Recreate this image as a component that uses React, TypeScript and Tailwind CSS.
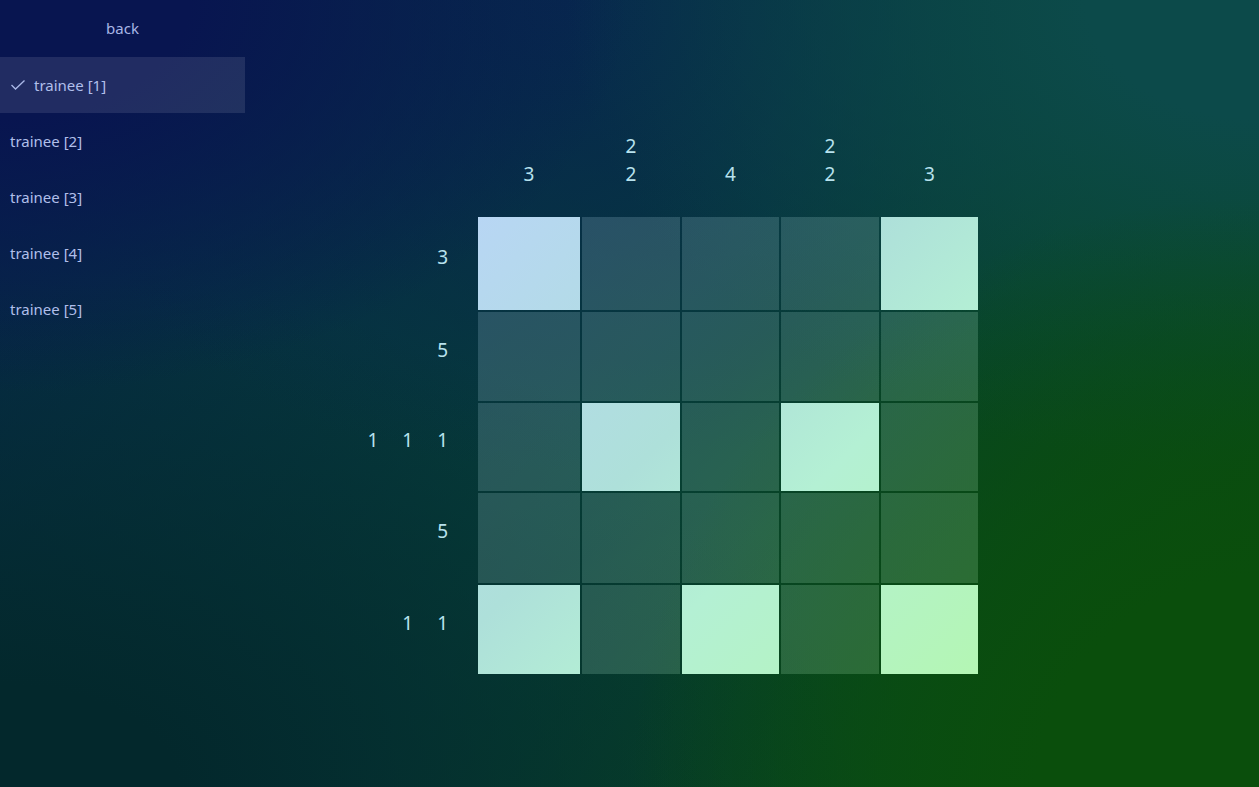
import React from "react";

const PAGE_BG =
  "bg-[radial-gradient(ellipse_50%_75%_at_100%_100%,#0a4e0c_0%,#0a4e0c_35%,rgba(10,78,12,0)_100%),radial-gradient(ellipse_55%_60%_at_100%_0%,#0c4a4a_0%,#0c4a4a_25%,rgba(12,74,74,0)_100%),radial-gradient(ellipse_50%_50%_at_0%_0%,#081550_0%,#081550_30%,rgba(8,21,80,0)_100%),radial-gradient(ellipse_45%_60%_at_45%_0%,#07284e_0%,rgba(7,40,78,0)_100%),radial-gradient(ellipse_70%_65%_at_0%_100%,#03282c_0%,#03282c_20%,rgba(3,40,44,0)_100%),linear-gradient(125deg,#06244a_0%,#063e38_50%,#084620_75%,#0a4e0c_100%)] bg-fixed";

const LIGHT_BG =
  "bg-[linear-gradient(135deg,#b8d6f4_490px,#aee0da_780px,#b4f0d4_920px,#b4f6b4_1167px)] bg-fixed";

const pattern = [
  [1, 0, 0, 0, 1],
  [0, 0, 0, 0, 0],
  [0, 1, 0, 1, 0],
  [0, 0, 0, 0, 0],
  [1, 0, 1, 0, 1],
];

const colClues = [[3], [2, 2], [4], [2, 2], [3]];
const rowClues = [[3], [5], [1, 1, 1], [5], [1, 1]];

function Check() {
  return (
    <svg width="16" height="12" viewBox="0 0 16 12" className="mr-[8px]">
      <polyline
        points="1.5,6 5.5,10 14.5,1.5"
        fill="none"
        stroke="#aab8e8"
        strokeWidth="1.3"
      />
    </svg>
  );
}

export default function App() {
  const items = ["trainee [1]", "trainee [2]", "trainee [3]", "trainee [4]", "trainee [5]"];
  return (
    <div
      className={`flex h-screen w-full overflow-hidden font-['Noto_Sans','Open_Sans',sans-serif] ${PAGE_BG}`}
    >
      <aside className="flex w-[245px] shrink-0 flex-col">
        <div className="flex h-[57px] items-center justify-center text-[15px] text-[#a8b6e6]">
          back
        </div>
        {items.map((t, i) => (
          <div
            key={t}
            className={
              i === 0
                ? "flex h-[56px] items-center bg-white/10 px-[10px] text-[15px] text-[#b0bfea]"
                : "flex h-[56px] items-center px-[10px] text-[15px] text-[#b0bfea]"
            }
          >
            {i === 0 && <Check />}
            {t}
          </div>
        ))}
      </aside>

      <main className="flex-1 pl-[113px] pt-[132px]">
        <div className="grid grid-cols-[120px_500px] text-[19px] leading-[28px] text-[#b8e2ee]">
          <div />
          <div className="grid h-[85px] grid-cols-[102px_98px_97px_98px_97px] gap-[2px]">
            {colClues.map((c, i) => (
              <div key={i} className="flex flex-col items-center justify-end pb-[29px]">
                {c.map((n, j) => (
                  <span key={j}>{n}</span>
                ))}
              </div>
            ))}
          </div>

          <div className="grid h-[457px] grid-rows-[93px_89px_88px_90px_89px] gap-[2px]">
            {rowClues.map((r, i) => (
              <div
                key={i}
                className="flex items-center justify-end gap-[24px] pb-[14px] pr-[30px]"
              >
                {r.map((n, j) => (
                  <span key={j}>{n}</span>
                ))}
              </div>
            ))}
          </div>

          <div className="grid h-[457px] w-[500px] grid-cols-[102px_98px_97px_98px_97px] grid-rows-[93px_89px_88px_90px_89px] gap-[2px]">
            {pattern.flatMap((row, r) =>
              row.map((v, c) =>
                v ? (
                  <div key={`${r}-${c}`} className={LIGHT_BG} />
                ) : (
                  <div key={`${r}-${c}`} className={LIGHT_BG}>
                    <div className={`h-full w-full opacity-80 ${PAGE_BG}`} />
                  </div>
                )
              )
            )}
          </div>
        </div>
      </main>
    </div>
  );
}
